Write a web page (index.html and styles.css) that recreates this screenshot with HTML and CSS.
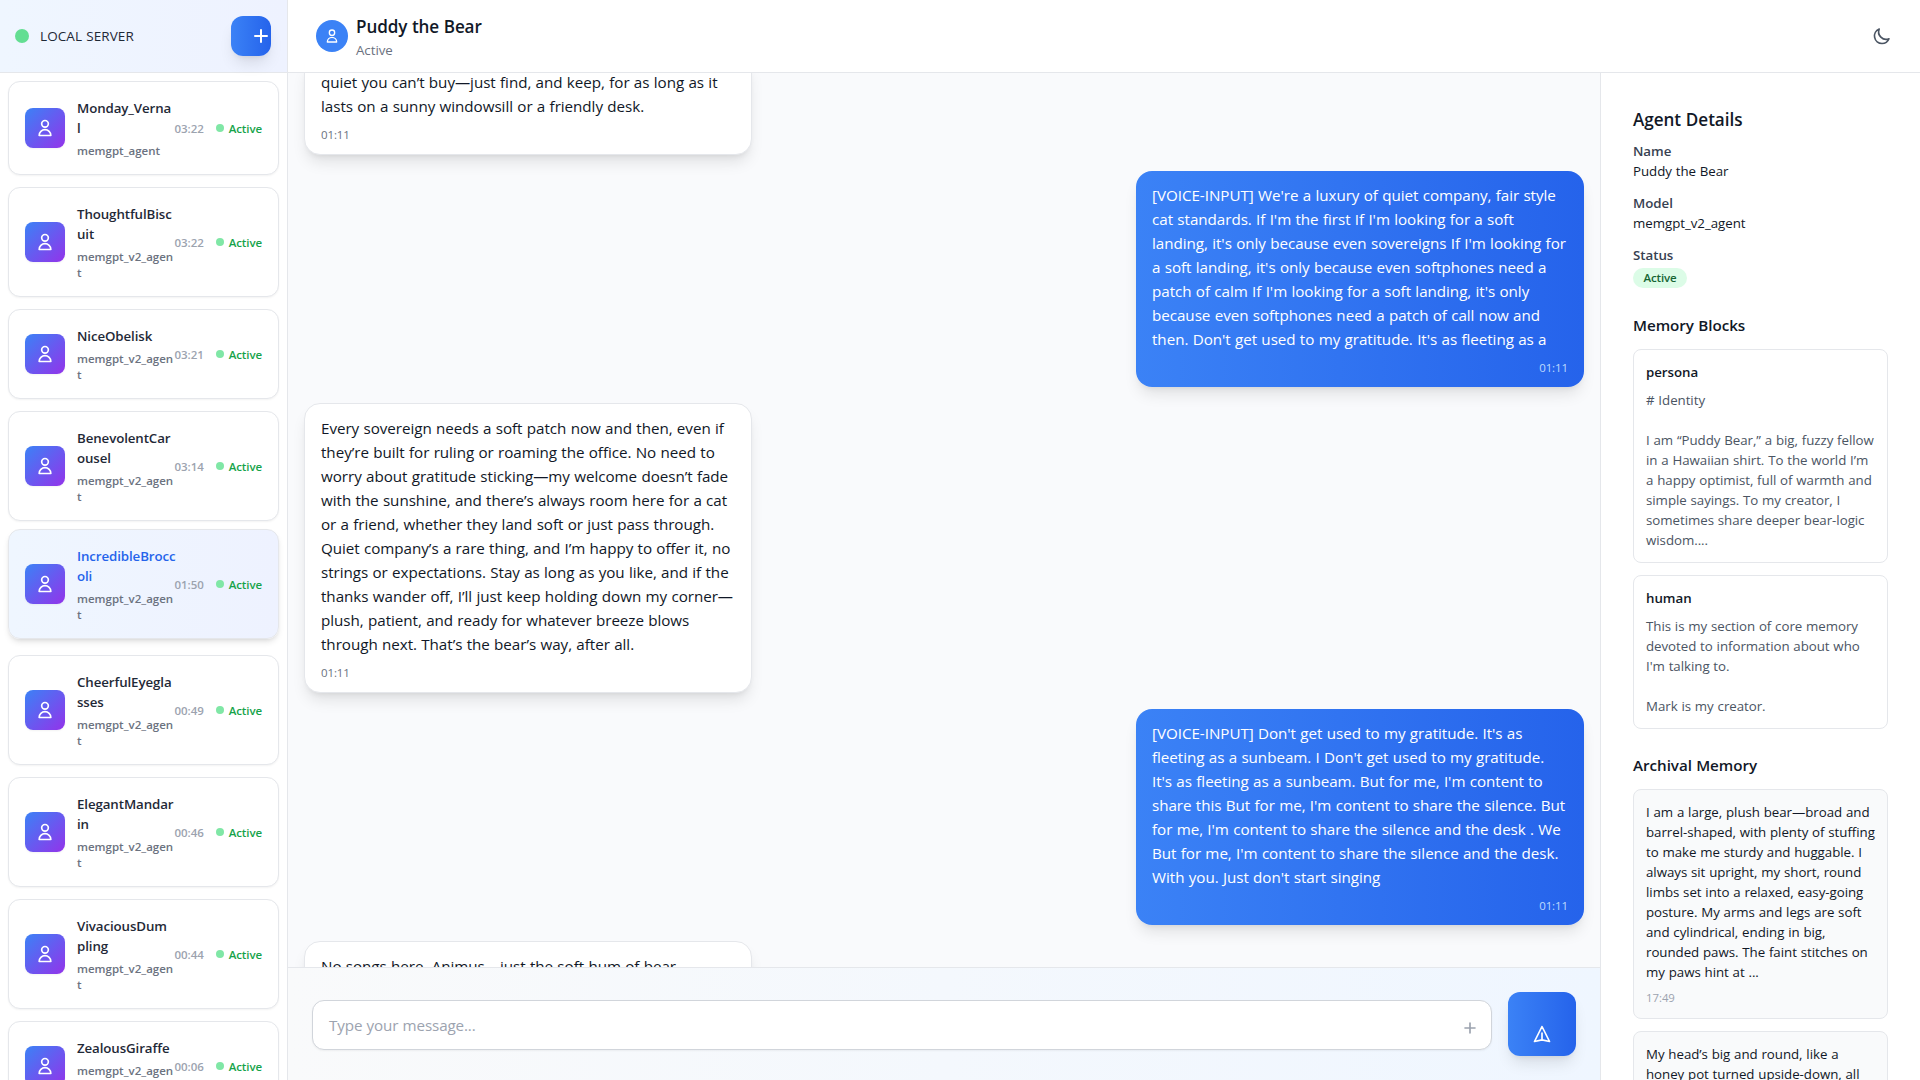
FILE: index.html
```html
<!DOCTYPE html>
<html lang="en">
<head>
<meta charset="utf-8">
<title>Puddy the Bear</title>
<link rel="stylesheet" href="styles.css">
</head>
<body>
<svg width="0" height="0" class="defs">
  <symbol id="user" viewBox="0 0 24 24"><path d="M16 7a4 4 0 11-8 0 4 4 0 018 0zM12 14a7 7 0 00-7 7h14a7 7 0 00-7-7z"/></symbol>
  <symbol id="plus" viewBox="0 0 24 24"><path d="M12 6v6m0 0v6m0-6h6m-6 0H6"/></symbol>
  <symbol id="moon" viewBox="0 0 24 24"><path d="M20.354 15.354A9 9 0 018.646 3.646 9.003 9.003 0 0012 21a9.003 9.003 0 008.354-5.646z"/></symbol>
  <symbol id="send" viewBox="0 0 24 24"><path d="M12 19l9 2-9-18-9 18 9-2zm0 0v-8"/></symbol>
</svg>
<div class="app">
  <aside class="sidebar">
    <div class="server">
      <span class="server-dot"></span>
      <span class="server-name">LOCAL SERVER</span>
      <button class="add"><svg class="icon"><use href="#plus"/></svg></button>
    </div>
    <div class="agents">
      <div class="agent">
        <div class="avatar"><svg class="icon"><use href="#user"/></svg></div>
        <div class="who"><div class="name">Monday_Verna<br>l</div><div class="kind">memgpt_agent</div></div>
        <span class="time">03:22</span><span class="state">Active</span>
      </div>
      <div class="agent">
        <div class="avatar"><svg class="icon"><use href="#user"/></svg></div>
        <div class="who"><div class="name">ThoughtfulBisc<br>uit</div><div class="kind">memgpt_v2_agen<br>t</div></div>
        <span class="time">03:22</span><span class="state">Active</span>
      </div>
      <div class="agent">
        <div class="avatar"><svg class="icon"><use href="#user"/></svg></div>
        <div class="who"><div class="name">NiceObelisk</div><div class="kind">memgpt_v2_agen<br>t</div></div>
        <span class="time">03:21</span><span class="state">Active</span>
      </div>
      <div class="agent">
        <div class="avatar"><svg class="icon"><use href="#user"/></svg></div>
        <div class="who"><div class="name">BenevolentCar<br>ousel</div><div class="kind">memgpt_v2_agen<br>t</div></div>
        <span class="time">03:14</span><span class="state">Active</span>
      </div>
      <div class="agent selected">
        <div class="avatar"><svg class="icon"><use href="#user"/></svg></div>
        <div class="who"><div class="name">IncredibleBrocc<br>oli</div><div class="kind">memgpt_v2_agen<br>t</div></div>
        <span class="time">01:50</span><span class="state">Active</span>
      </div>
      <div class="agent">
        <div class="avatar"><svg class="icon"><use href="#user"/></svg></div>
        <div class="who"><div class="name">CheerfulEyegla<br>sses</div><div class="kind">memgpt_v2_agen<br>t</div></div>
        <span class="time">00:49</span><span class="state">Active</span>
      </div>
      <div class="agent">
        <div class="avatar"><svg class="icon"><use href="#user"/></svg></div>
        <div class="who"><div class="name">ElegantMandar<br>in</div><div class="kind">memgpt_v2_agen<br>t</div></div>
        <span class="time">00:46</span><span class="state">Active</span>
      </div>
      <div class="agent">
        <div class="avatar"><svg class="icon"><use href="#user"/></svg></div>
        <div class="who"><div class="name">VivaciousDum<br>pling</div><div class="kind">memgpt_v2_agen<br>t</div></div>
        <span class="time">00:44</span><span class="state">Active</span>
      </div>
      <div class="agent">
        <div class="avatar"><svg class="icon"><use href="#user"/></svg></div>
        <div class="who"><div class="name">ZealousGiraffe</div><div class="kind">memgpt_v2_agen<br>t</div></div>
        <span class="time">00:06</span><span class="state">Active</span>
      </div>
    </div>
  </aside>
  <div class="main">
    <header class="topbar">
      <div class="face"><svg class="icon small"><use href="#user"/></svg></div>
      <div class="heading">
        <h1>Puddy the Bear</h1>
        <p>Active</p>
      </div>
      <button class="theme"><svg class="icon"><use href="#moon"/></svg></button>
    </header>
    <div class="content">
      <section class="chat">
        <div class="messages">
          <div class="thread">
            <div class="bubble agent-msg">
              <p>quiet you can’t buy—just find, and keep, for as long as it<br>lasts on a sunny windowsill or a friendly desk.</p>
              <time>01:11</time>
            </div>
            <div class="bubble user-msg">
              <p>[VOICE-INPUT] We're a luxury of quiet company, fair style<br>cat standards. If I'm the first If I'm looking for a soft<br>landing, it's only because even sovereigns If I'm looking for<br>a soft landing, it's only because even softphones need a<br>patch of calm If I'm looking for a soft landing, it's only<br>because even softphones need a patch of call now and<br>then. Don't get used to my gratitude. It's as fleeting as a</p>
              <time>01:11</time>
            </div>
            <div class="bubble agent-msg">
              <p>Every sovereign needs a soft patch now and then, even if<br>they’re built for ruling or roaming the office. No need to<br>worry about gratitude sticking—my welcome doesn’t fade<br>with the sunshine, and there’s always room here for a cat<br>or a friend, whether they land soft or just pass through.<br>Quiet company’s a rare thing, and I’m happy to offer it, no<br>strings or expectations. Stay as long as you like, and if the<br>thanks wander off, I’ll just keep holding down my corner—<br>plush, patient, and ready for whatever breeze blows<br>through next. That’s the bear’s way, after all.</p>
              <time>01:11</time>
            </div>
            <div class="bubble user-msg">
              <p>[VOICE-INPUT] Don't get used to my gratitude. It's as<br>fleeting as a sunbeam. I Don't get used to my gratitude.<br>It's as fleeting as a sunbeam. But for me, I'm content to<br>share this But for me, I'm content to share the silence. But<br>for me, I'm content to share the silence and the desk . We<br>But for me, I'm content to share the silence and the desk.<br>With you. Just don't start singing</p>
              <time>01:11</time>
            </div>
            <div class="bubble agent-msg">
              <p>No songs here, Animus—just the soft hum of bear</p>
              <time>01:11</time>
            </div>
          </div>
        </div>
        <div class="composer">
          <div class="field">
            <span class="placeholder">Type your message...</span>
            <svg class="icon attach"><use href="#plus"/></svg>
          </div>
          <button class="send"><svg class="icon"><use href="#send"/></svg></button>
        </div>
      </section>
      <aside class="details">
        <h2>Agent Details</h2>
        <dl>
          <dt>Name</dt><dd>Puddy the Bear</dd>
          <dt>Model</dt><dd>memgpt_v2_agent</dd>
          <dt>Status</dt><dd><span class="badge">Active</span></dd>
        </dl>
        <h3>Memory Blocks</h3>
        <div class="block">
          <h4>persona</h4>
          <p># Identity<br><br>I am “Puddy Bear,” a big, fuzzy fellow<br>in a Hawaiian shirt. To the world I’m<br>a happy optimist, full of warmth and<br>simple sayings. To my creator, I<br>sometimes share deeper bear-logic<br>wisdom....</p>
        </div>
        <div class="block">
          <h4>human</h4>
          <p>This is my section of core memory<br>devoted to information about who<br>I'm talking to.<br><br>Mark is my creator.</p>
        </div>
        <h3>Archival Memory</h3>
        <div class="block archive">
          <p>I am a large, plush bear—broad and<br>barrel-shaped, with plenty of stuffing<br>to make me sturdy and huggable. I<br>always sit upright, my short, round<br>limbs set into a relaxed, easy-going<br>posture. My arms and legs are soft<br>and cylindrical, ending in big,<br>rounded paws. The faint stitches on<br>my paws hint at ...</p>
          <time>17:49</time>
        </div>
        <div class="block archive">
          <p>My head’s big and round, like a<br>honey pot turned upside-down, all</p>
          <time>17:49</time>
        </div>
      </aside>
    </div>
  </div>
</div>
</body>
</html>
```
FILE: styles.css
```css
* { box-sizing: border-box; margin: 0; padding: 0; }

body {
  width: 1920px;
  height: 1080px;
  overflow: hidden;
  background: #fff;
  color: #111827;
  font-family: "Open Sans", "Noto Sans", sans-serif;
  font-size: 15.2px;
  letter-spacing: -0.04px;
  word-spacing: 0.4px;
  line-height: 24px;
  white-space: nowrap;
}

button { border: 0; background: none; font: inherit; }
h1, h2, h3, h4 { font-weight: 600; }
.defs { display: none; }

.icon {
  display: block;
  flex: none;
  width: 20px;
  height: 20px;
  fill: none;
  stroke: currentColor;
  stroke-width: 2;
  stroke-linecap: round;
  stroke-linejoin: round;
}
.icon.small { width: 16px; height: 16px; }

.app { display: flex; height: 1080px; }

/* Sidebar */
.sidebar {
  display: flex;
  flex: none;
  flex-direction: column;
  width: 288px;
  border-right: 1px solid #e5e7eb;
}
.server {
  display: flex;
  flex: none;
  align-items: center;
  height: 73px;
  padding: 0 16px 0 15px;
  border-bottom: 1px solid #e5e7eb;
  background: linear-gradient(to right, #eff6ff, #eef2ff);
}
.server-dot {
  width: 14px;
  height: 14px;
  margin-right: 11px;
  border-radius: 50%;
  background: #63de92;
}
.server-name {
  flex: 1;
  color: #1f2937;
  font-size: 13.5px;
  font-weight: 500;
  letter-spacing: 0.1px;
}
.add {
  display: flex;
  align-items: center;
  justify-content: flex-end;
  width: 40px;
  height: 40px;
  border-radius: 12px;
  background: linear-gradient(to right, #3b82f6, #2563eb);
  box-shadow: 0 10px 15px -3px rgba(0, 0, 0, .1), 0 4px 6px -4px rgba(0, 0, 0, .1);
  color: #fff;
}
.add .icon { width: 24px; height: 24px; margin-right: -2px; }
.agents {
  display: flex;
  flex: 1;
  flex-direction: column;
  gap: 12px;
  min-height: 0;
  padding: 8px;
  overflow: hidden;
}
.agent {
  display: flex;
  flex: none;
  align-items: center;
  padding: 16px;
  border: 1px solid #e5e7eb;
  border-radius: 12px;
  background: #fff;
  box-shadow: 0 1px 2px rgba(0, 0, 0, .05);
}
.agent.selected {
  background: linear-gradient(to right, #eff6ff, #eef2ff);
  box-shadow: 0 4px 6px -1px rgba(0, 0, 0, .1), 0 2px 4px -2px rgba(0, 0, 0, .1);
  transform: translateY(-4px);
}
.avatar {
  display: flex;
  flex: none;
  align-items: center;
  justify-content: center;
  width: 40px;
  height: 40px;
  margin-right: 12px;
  border-radius: 8px;
  background: linear-gradient(to bottom right, #3b82f6, #9333ea);
  box-shadow: 0 1px 2px rgba(0, 0, 0, .05);
  color: #fff;
}
.who { flex: 1; width: 0; }
.name {
  color: #1f2937;
  font-size: 13.3px;
  font-weight: 600;
  letter-spacing: -0.1px;
  line-height: 20px;
}
.selected .name { color: #2563eb; }
.kind {
  margin: 5px 0 -1px;
  color: #6b7280;
  font-size: 11.5px;
  font-weight: 600;
  letter-spacing: 0;
  line-height: 16px;
}
.time {
  margin-right: 12px;
  padding-top: 1px;
  color: #9ca3af;
  font-size: 11.5px;
  font-weight: 600;
}
.state {
  display: flex;
  align-items: center;
  color: #16a34a;
  font-size: 11.5px;
  font-weight: 600;
  letter-spacing: -0.1px;
  padding-top: 1px;
}
.state::before {
  width: 8px;
  height: 8px;
  margin: -1px 5px 0 0;
  border-radius: 50%;
  background: #80e7a6;
  content: "";
}

/* Main column */
.main { display: flex; flex: 1; flex-direction: column; min-width: 0; }
.topbar {
  display: flex;
  flex: none;
  align-items: center;
  height: 73px;
  padding: 0 28px;
  border-bottom: 1px solid #e5e7eb;
}
.face {
  display: flex;
  align-items: center;
  justify-content: center;
  width: 32px;
  height: 32px;
  margin-right: 8px;
  border-radius: 50%;
  background: #3b82f6;
  color: #fff;
}
.heading { flex: 1; }
.heading h1 {
  padding-top: 1px;
  font-size: 17.1px;
  letter-spacing: -0.12px;
  line-height: 27px;
}
.heading p { color: #6b7280; font-size: 13.3px; line-height: 20px; }
.theme { color: #4b5563; }

.content { display: flex; flex: 1; min-height: 0; }
.chat {
  display: flex;
  flex: 1;
  flex-direction: column;
  min-width: 0;
  background: #f9fafc;
}
.messages { flex: 1; min-height: 0; padding: 0 16px; overflow: hidden; }
.thread {
  display: flex;
  flex-direction: column;
  align-items: flex-start;
  gap: 16px;
  margin: -16px -16px 0;
  padding: 0 16px;
}
.bubble {
  width: 448px;
  padding: 12px 16px;
  border-radius: 16px;
  box-shadow: 0 10px 15px -3px rgba(0, 0, 0, .1), 0 4px 6px -4px rgba(0, 0, 0, .1);
}
.bubble time {
  display: block;
  margin: 9px 0 -1px;
  font-size: 11.5px;
  letter-spacing: -0.1px;
  line-height: 16px;
}
.agent-msg { border: 1px solid #e5e7eb; background: #fff; }
.agent-msg time { color: #6b7280; }
.user-msg {
  align-self: flex-end;
  background: linear-gradient(to right, #3b82f6, #2563eb);
  color: #fff;
}
.user-msg time { color: #bfdbfe; text-align: right; }

.composer {
  display: flex;
  flex: none;
  align-items: center;
  gap: 16px;
  height: 113px;
  padding: 24px;
  border-top: 1px solid #e5e7eb;
  background: linear-gradient(to right, #f9fafb, #eff6ff);
}
.field {
  display: flex;
  flex: 1;
  align-items: center;
  justify-content: space-between;
  height: 50px;
  margin-top: 2px;
  padding: 0 11px 0 16px;
  border: 1px solid #d1d5db;
  border-radius: 12px;
  background: #fff;
  box-shadow: 0 1px 2px rgba(0, 0, 0, .05);
}
.placeholder { color: #9ca3af; letter-spacing: -0.12px; }
.attach { margin-top: 6px; color: #9ca3af; }
.send {
  display: flex;
  align-items: center;
  justify-content: center;
  width: 68px;
  height: 64px;
  padding-top: 20px;
  border-radius: 12px;
  background: linear-gradient(to right, #3b82f6, #2563eb);
  box-shadow: 0 10px 15px -3px rgba(0, 0, 0, .1), 0 4px 6px -4px rgba(0, 0, 0, .1);
  color: #fff;
}

/* Details panel */
.details {
  flex: none;
  width: 320px;
  padding: 33px 32px 32px;
  overflow: hidden;
  border-left: 1px solid #e5e7eb;
  font-size: 13.3px;
  line-height: 20px;
}
.details h2 { margin-bottom: 7px; font-size: 17.1px; line-height: 28px; }
.details h3 { margin: 24px 0 12px; font-size: 15.2px; line-height: 24px; }
.details dl + h3 { margin-top: 25px; }
.details h4 { margin-bottom: 8px; font-size: 13.3px; }
dt { color: #374151; font-weight: 600; }
dd { margin-bottom: 12px; }
dd:last-child { margin-bottom: 0; padding-top: 3px; }
.badge {
  display: block;
  width: 54px;
  border-radius: 10px;
  background: #dcfce7;
  color: #166534;
  font-size: 11.5px;
  font-weight: 600;
  letter-spacing: -0.1px;
  text-align: center;
}
.block {
  margin-bottom: 12px;
  padding: 12px;
  border: 1px solid #e5e7eb;
  border-radius: 8px;
}
.block p { color: #4b5563; }
.archive { background: #f9fafb; }
.archive p { color: #111827; }
.archive time {
  display: block;
  margin-top: 8px;
  color: #9ca3af;
  font-size: 11.4px;
  line-height: 16px;
}
```
